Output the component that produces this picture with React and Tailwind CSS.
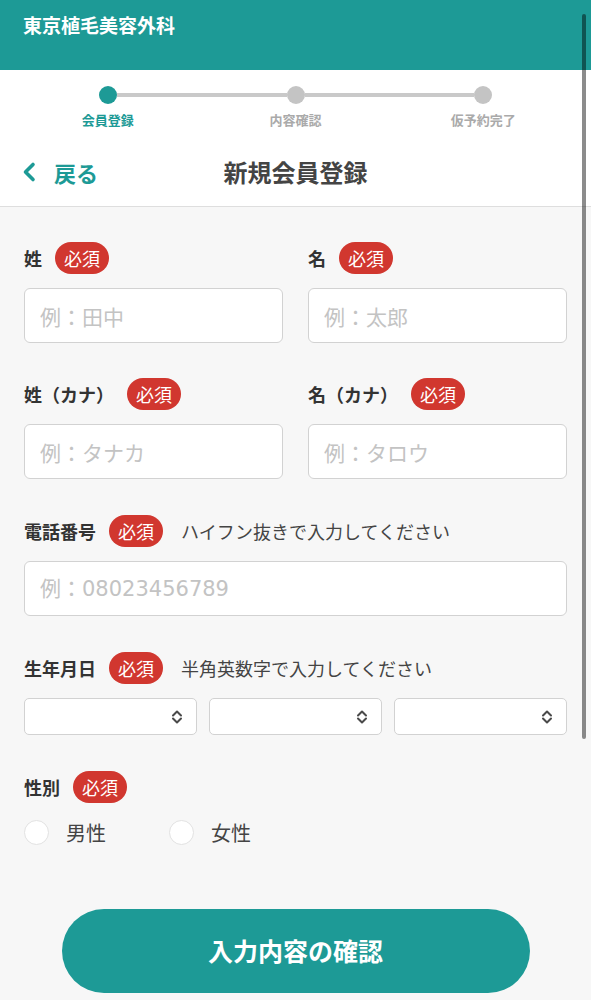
import { useState } from 'react';

const TEAL = 'bg-[#1d9a96]';

function Required() {
    return (
        <span className="ml-[13px] inline-flex h-[32px] items-center rounded-full bg-[#d1372f] px-[9px] text-[18px] leading-none text-white">
            必須
        </span>
    );
}

function FieldLabel({ label, note }) {
    return (
        <div className="flex h-[32px] items-center">
            <span className="text-[18px] font-bold leading-none text-[#333]">{label}</span>
            <Required />
            {note && <span className="ml-[18px] text-[18px] leading-none text-[#444]">{note}</span>}
        </div>
    );
}

function TextInput({ placeholder, numeric }) {
    return (
        <input
            type="text"
            placeholder={placeholder}
            className={`mt-[14px] block h-[55px] w-full rounded-[6px] border border-[#d2d2d2] bg-white px-[15px] text-[21px] text-[#333] outline-none placeholder:text-[#c3c3c3] ${numeric ? 'font-[DejaVu_Sans,Noto_Sans_CJK_JP,sans-serif]' : ''}`}
        />
    );
}

function SelectBox() {
    return (
        <div className="flex h-[37px] items-center justify-end rounded-[5px] border border-[#d2d2d2] bg-white pr-[13px]">
            <svg width="12" height="16" viewBox="0 0 12 16" fill="none" stroke="#4a4a4a" strokeWidth="2" strokeLinecap="round" strokeLinejoin="round">
                <path d="M2 6.5 L6 2.5 L10 6.5" />
                <path d="M2 9.5 L6 13.5 L10 9.5" />
            </svg>
        </div>
    );
}

function Radio({ label, checked, onClick, className = '' }) {
    return (
        <button type="button" onClick={onClick} className={`flex items-center ${className}`}>
            <span className="flex h-[25px] w-[25px] items-center justify-center rounded-full border border-[#e2e2e2] bg-white">
                {checked && <span className="h-[13px] w-[13px] rounded-full bg-[#1d9a96]" />}
            </span>
            <span className="ml-[17px] text-[20px] leading-none text-[#444]">{label}</span>
        </button>
    );
}

export default function App() {
    const [gender, setGender] = useState('');

    return (
        <div
            className="relative min-h-screen w-full bg-[#f7f7f7]"
            style={{ fontFamily: '"Noto Sans CJK JP", "Noto Sans", sans-serif' }}
        >
            <header className={`${TEAL} h-[70px] px-[23px] pt-[12px]`}>
                <h1 className="text-[19px] font-bold leading-[26px] text-white">東京植毛美容外科</h1>
            </header>

            <div className="border-b border-[#dedede] bg-white">
                <div className="pt-[16px]">
                    <div className="flex items-center px-[99px]">
                        <span className="h-[18px] w-[18px] rounded-full bg-[#1d9a96]" />
                        <span className="h-[4px] flex-1 bg-[#c9c9c9]" />
                        <span className="h-[18px] w-[18px] rounded-full bg-[#c4c4c4]" />
                        <span className="h-[4px] flex-1 bg-[#c9c9c9]" />
                        <span className="h-[18px] w-[18px] rounded-full bg-[#c4c4c4]" />
                    </div>
                    <div className="mt-[8px] grid grid-cols-3 px-[14px] text-center text-[13px] font-bold leading-[16px]">
                        <span className="text-[#1d9a96]">会員登録</span>
                        <span className="text-[#aaaaaa]">内容確認</span>
                        <span className="text-[#aaaaaa]">仮予約完了</span>
                    </div>
                </div>

                <div className="grid h-[78px] grid-cols-[1fr_auto_1fr] items-center pt-[10px]">
                    <button type="button" className="flex items-center pl-[21px] text-[#1d9a96]">
                        <svg width="16" height="22" viewBox="0 0 16 22" fill="none" stroke="currentColor" strokeWidth="3.6" strokeLinecap="round" strokeLinejoin="round">
                            <path d="M12 3.5 L4.5 11 L12 18.5" />
                        </svg>
                        <span className="ml-[17px] text-[22px] font-bold leading-none">戻る</span>
                    </button>
                    <h2 className="text-[24px] font-bold leading-none text-[#444]">新規会員登録</h2>
                    <span />
                </div>
            </div>

            <form className="px-6 pt-[35px]" onSubmit={(e) => e.preventDefault()}>
                <div className="grid grid-cols-2 gap-x-[25px]">
                    <div>
                        <FieldLabel label="姓" />
                        <TextInput placeholder="例：田中" />
                    </div>
                    <div>
                        <FieldLabel label="名" />
                        <TextInput placeholder="例：太郎" />
                    </div>
                </div>

                <div className="mt-[35px] grid grid-cols-2 gap-x-[25px]">
                    <div>
                        <FieldLabel label="姓（カナ）" />
                        <TextInput placeholder="例：タナカ" />
                    </div>
                    <div>
                        <FieldLabel label="名（カナ）" />
                        <TextInput placeholder="例：タロウ" />
                    </div>
                </div>

                <div className="mt-[36px]">
                    <FieldLabel label="電話番号" note="ハイフン抜きで入力してください" />
                    <TextInput placeholder="例：08023456789" numeric />
                </div>

                <div className="mt-[36px]">
                    <FieldLabel label="生年月日" note="半角英数字で入力してください" />
                    <div className="mt-[14px] grid grid-cols-3 gap-[12px]">
                        <SelectBox />
                        <SelectBox />
                        <SelectBox />
                    </div>
                </div>

                <div className="mt-[36px]">
                    <FieldLabel label="性別" />
                    <div className="mt-[17px] flex items-center">
                        <Radio label="男性" checked={gender === 'male'} onClick={() => setGender('male')} />
                        <Radio label="女性" className="ml-[63px]" checked={gender === 'female'} onClick={() => setGender('female')} />
                    </div>
                </div>

                <div className="flex justify-center pb-[7px] pt-[64px]">
                    <button
                        type="submit"
                        className={`${TEAL} h-[84px] w-[468px] rounded-full text-[25px] font-bold text-white`}
                    >
                        入力内容の確認
                    </button>
                </div>
            </form>

            <div className="absolute right-[5px] top-[14px] h-[725px] w-[4px] rounded-full bg-black/45" />
        </div>
    );
}
